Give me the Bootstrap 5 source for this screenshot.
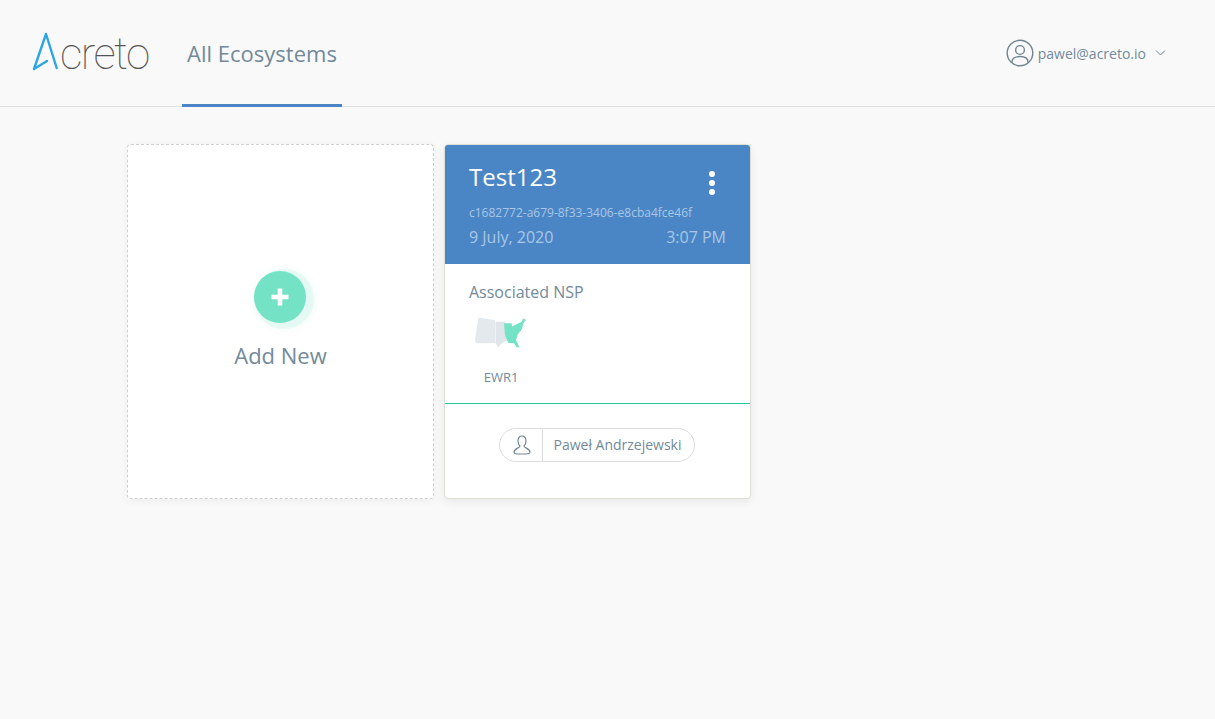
<!DOCTYPE html>
<html lang="en">
<head>
  <meta charset="UTF-8">
  <title>All Ecosystems</title>
  <link href="https://cdn.jsdelivr.net/npm/bootstrap@5.3.0/dist/css/bootstrap.min.css" rel="stylesheet">
  <style>
    body {
      background: #f9f9f9;
      font-family: "Open Sans", "Liberation Sans", sans-serif;
      color: #728a9b;
      height: 719px;
      overflow: hidden;
    }
    .top-bar {
      height: 107px;
      border-bottom: 1px solid #dedede;
      padding-left: 32px;
      padding-right: 48px;
    }
    .brand-box {
      width: 150px;
      height: 47px;
      margin-top: 31px;
    }
    .brand-word {
      font-family: Roboto, "Open Sans", sans-serif;
      font-size: 44px;
      font-weight: 100;
      line-height: 47px;
      color: #555;
      letter-spacing: -1.6px;
      margin-left: -1px;
    }
    .tab-active {
      width: 160px;
      height: 107px;
      line-height: 107px;
      border-bottom: 3px solid #4a86c5;
      font-size: 22px;
      color: #728a9b;
      text-align: center;
      text-decoration: none;
    }
    .user-box {
      margin-top: 38px;
      height: 30px;
      font-size: 14px;
    }
    .board {
      padding: 37px 0 0 127px;
      gap: 10px;
    }
    .add-tile, .eco-tile {
      width: 307px;
      height: 355px;
      background: #fff;
      border-radius: 4px;
    }
    .add-tile {
      border: 1px dashed #cfcfcf;
      box-shadow: 0 2px 8px rgba(0, 0, 0, .05);
      padding-top: 126px;
    }
    .plus-disc {
      width: 52px;
      height: 52px;
      border-radius: 50%;
      background: #74e2c4;
      margin-right: 1px;
      box-shadow: 4px 2px 0 4px rgba(116, 226, 196, .12), 4px 2px 6px 6px rgba(116, 226, 196, .08);
    }
    .add-label {
      font-size: 22px;
      margin-top: 17px;
      line-height: 30px;
    }
    .eco-tile {
      border: 1px solid #dfdfd5;
      box-shadow: 0 3px 10px rgba(0, 0, 0, .07);
      overflow: hidden;
    }
    .eco-head {
      height: 119px;
      background: #4a86c5;
      padding: 16px 24px 0 24px;
      color: #a9c6e6;
    }
    .eco-title {
      font-size: 24px;
      line-height: 32px;
      color: #fff;
    }
    .eco-id {
      font-size: 12px;
      line-height: 16px;
      margin-top: 10px;
    }
    .eco-date {
      font-size: 16px;
      line-height: 22px;
      margin-top: 5px;
    }
    .more-dots {
      gap: 3px;
      margin-top: 10px;
      margin-right: 11px;
    }
    .more-dots span {
      width: 6px;
      height: 6px;
      border-radius: 50%;
      background: #fff;
    }
    .nsp-block {
      height: 140px;
      padding: 17px 24px 0 24px;
      border-bottom: 1px solid #21c99c;
    }
    .nsp-label {
      font-size: 16px;
      line-height: 22px;
    }
    .nsp-map {
      display: block;
      margin: 13px 0 0 6px;
    }
    .nsp-code {
      font-size: 13px;
      line-height: 16px;
      width: 60px;
      margin-top: 20px;
      text-align: center;
      color: #728a9b;
      margin-left: 2px;
    }
    .owner-pill {
      margin-top: 24px;
      margin-right: 1px;
      height: 34px;
      border: 1px solid #dcdcdc;
      border-radius: 17px;
      font-size: 14px;
    }
    .owner-icon {
      width: 43px;
      height: 32px;
      padding-left: 1px;
      border-right: 1px solid #dcdcdc;
    }
    .owner-name {
      padding: 0 12px 0 10px;
      line-height: 32px;
    }
  </style>
</head>
<body>

<div class="top-bar d-flex justify-content-between">
  <div class="d-flex">
    <div class="brand-box d-flex">
      <svg width="29" height="40" viewBox="0 0 29 40" fill="none" stroke="#2ea6e2" stroke-width="2.4" stroke-linecap="round" stroke-linejoin="round">
        <path d="M2 38 L14 3 L24.700 37 M2 38 L15 30"/>
      </svg>
      <span class="brand-word">creto</span>
    </div>
    <a class="tab-active d-block" href="#">All Ecosystems</a>
  </div>
  <div class="user-box d-flex align-items-center">
    <svg class="me-1" width="28" height="28" viewBox="0 0 28 28" fill="none" stroke="#71848f" stroke-width="1.4">
      <circle cx="14" cy="14" r="12.800"/>
      <circle cx="14" cy="11" r="4.400"/>
      <path d="M6 23 C6 18.500 9 17.500 14 17.500 C19 17.500 22 18.500 22 23"/>
    </svg>
    <span>pawel@acreto.io</span>
    <svg class="ms-2" width="13" height="8" viewBox="0 0 13 8" fill="none" stroke="#71848f" stroke-width="1">
      <path d="M2 1.500 L6.500 6 L11 1.500"/>
    </svg>
  </div>
</div>

<div class="board d-flex">
  <div class="add-tile d-flex flex-column align-items-center">
    <div class="plus-disc d-flex align-items-center justify-content-center">
      <svg width="18" height="18" viewBox="0 0 18 18" fill="#fff">
        <path d="M6.700 0.500 H11.300 V6.700 H17.500 V11.300 H11.300 V17.500 H6.700 V11.300 H0.500 V6.700 H6.700 Z"/>
      </svg>
    </div>
    <div class="add-label">Add New</div>
  </div>

  <div class="eco-tile">
    <div class="eco-head">
      <div class="d-flex justify-content-between">
        <div class="eco-title">Test123</div>
        <div class="more-dots d-flex flex-column"><span></span><span></span><span></span></div>
      </div>
      <div class="eco-id">c1682772-a679-8f33-3406-e8cba4fce46f</div>
      <div class="eco-date d-flex justify-content-between">
        <span>9 July, 2020</span>
        <span>3:07 PM</span>
      </div>
    </div>
    <div class="nsp-block">
      <div class="nsp-label">Associated NSP</div>
      <svg class="nsp-map" width="52" height="33" viewBox="0 0 52 33">
        <path fill="#e3e9ec" d="M3.300 1.700 L20 4 L20 27 L11.700 27.300 L1 27.300 L0 24 L1 17 Z"/>
        <path fill="#dfe5e8" d="M20.500 5.700 L30 5.700 L30 19 L33 24 L26.700 27.300 L23.300 31.300 L20.500 27.300 Z"/>
        <path fill="#74e2c4" d="M29 7.300 L36.700 7.300 L37 10.500 L40 9 L46.700 5.700 L48.300 2.300 L51 4 L48.300 7.300 L47 13 L43 18 L41 24 L44.300 31.300 L41.700 31.300 L39 27.300 L33.300 27 L30 19 Z"/>
      </svg>
      <div class="nsp-code">EWR1</div>
    </div>
    <div class="d-flex justify-content-center">
      <div class="owner-pill d-flex align-items-center">
        <div class="owner-icon d-flex align-items-center justify-content-center">
          <svg width="18" height="20" viewBox="0 0 18 20" fill="none" stroke="#71848f" stroke-width="1.200">
            <path d="M9 1 C6 1 5 3.500 5 6 C5 8.500 6 10 7 11 C7 13 1 13.500 1 17 C1 19 3 19 9 19 C15 19 17 19 17 17 C17 13.500 11 13 11 11 C12 10 13 8.500 13 6 C13 3.500 12 1 9 1 Z"/>
          </svg>
        </div>
        <div class="owner-name">Paweł Andrzejewski</div>
      </div>
    </div>
  </div>
</div>

</body>
</html>
